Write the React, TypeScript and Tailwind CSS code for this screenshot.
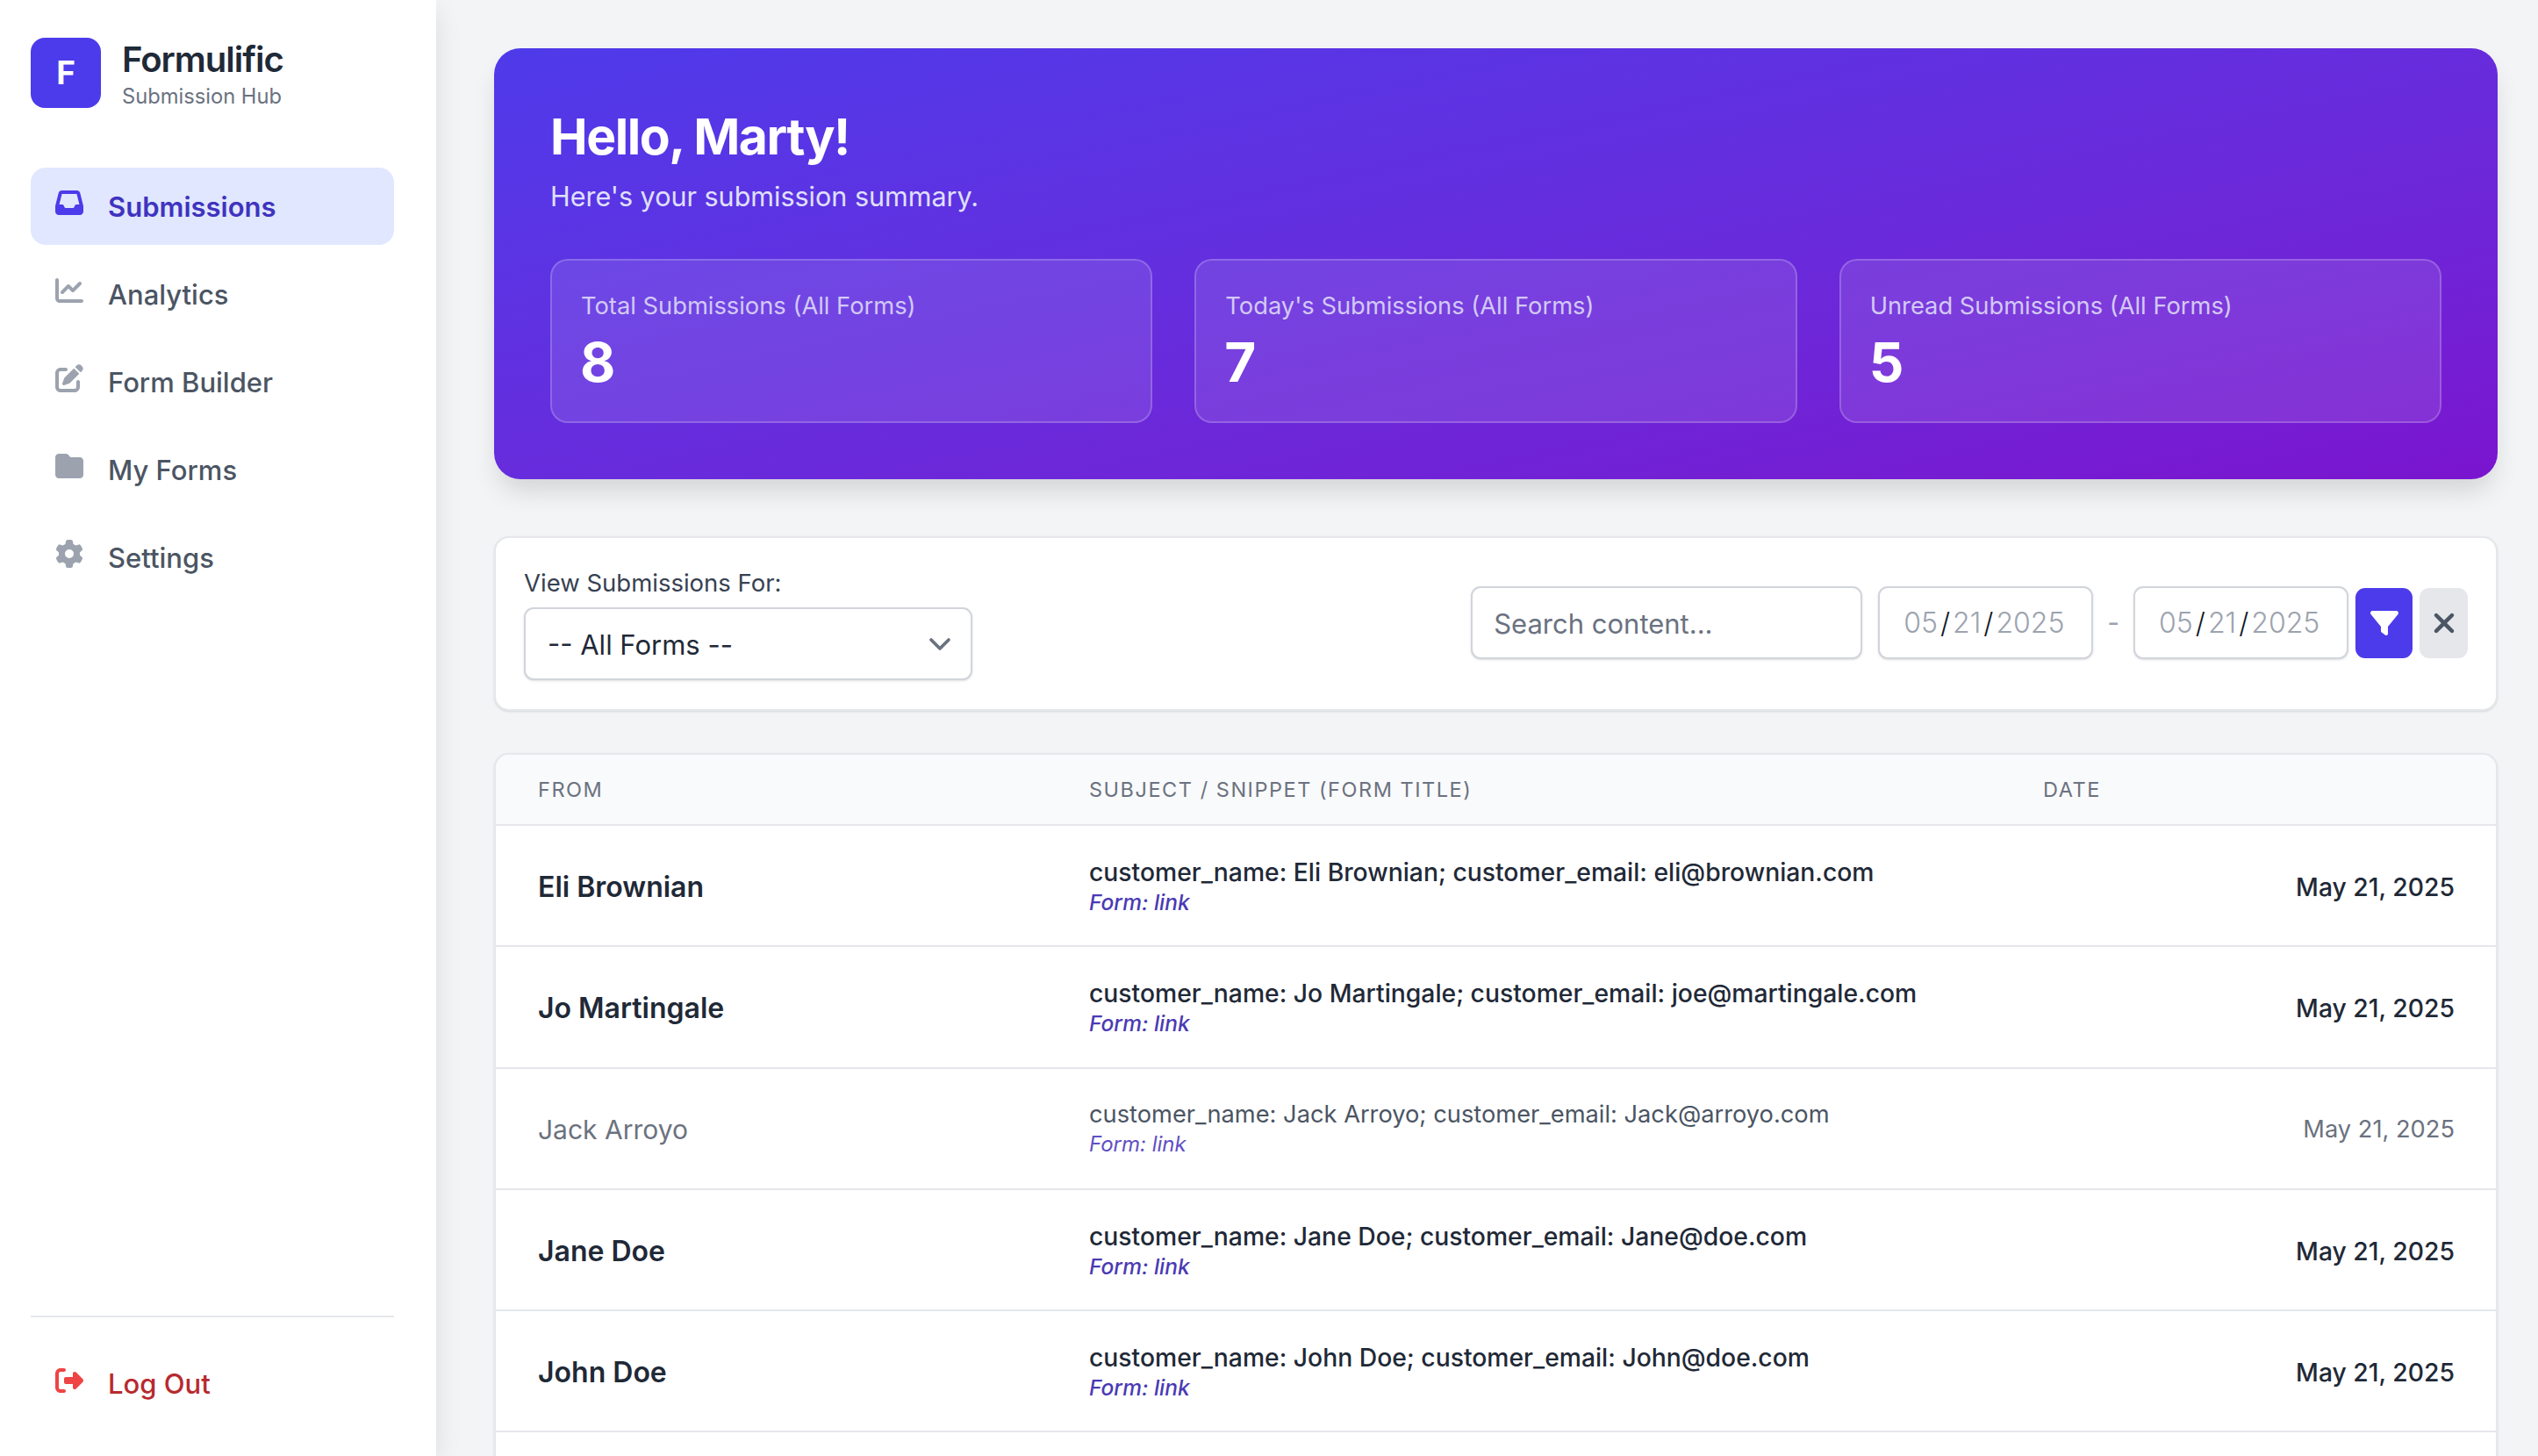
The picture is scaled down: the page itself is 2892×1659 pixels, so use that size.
import React from 'react'
import { FaInbox, FaChartLine, FaPenToSquare, FaFolder, FaGear, FaRightFromBracket, FaFilter, FaXmark } from 'react-icons/fa6'

const navItems = [
    { label: 'Submissions', icon: FaInbox, active: true },
    { label: 'Analytics', icon: FaChartLine },
    { label: 'Form Builder', icon: FaPenToSquare },
    { label: 'My Forms', icon: FaFolder },
    { label: 'Settings', icon: FaGear },
]

const stats = [
    { label: 'Total Submissions (All Forms)', value: '8' },
    { label: "Today's Submissions (All Forms)", value: '7' },
    { label: 'Unread Submissions (All Forms)', value: '5' },
]

const rows = [
    { name: 'Eli Brownian', email: 'eli@brownian.com', unread: true },
    { name: 'Jo Martingale', email: 'joe@martingale.com', unread: true },
    { name: 'Jack Arroyo', email: 'Jack@arroyo.com', unread: false },
    { name: 'Jane Doe', email: 'Jane@doe.com', unread: true },
    { name: 'John Doe', email: 'John@doe.com', unread: true },
]

function DateBox() {
    return (
        <div className="flex h-[83px] w-[245px] items-center rounded-[11px] border-2 border-[#d1d5db] bg-white pl-[27px] text-[32px] font-light text-[#9ca3af] shadow-sm">
            <span>05</span>
            <span className="mx-[3px] text-[#111827]">/</span>
            <span>21</span>
            <span className="mx-[3px] text-[#111827]">/</span>
            <span>2025</span>
        </div>
    )
}

function Sidebar() {
    return (
        <aside className="z-10 flex h-screen w-[497px] shrink-0 flex-col bg-white pt-[43px] pr-[48px] pl-[35px] shadow-[0_10px_30px_-3px_rgba(0,0,0,0.12)]">
            <div className="flex items-start">
                <div className="flex h-[80px] w-[80px] items-center justify-center rounded-[16px] bg-[#4c3bea] text-[37px] font-bold text-white">
                    F
                </div>
                <div className="ml-[24px]">
                    <div className="text-[40px] leading-[50px] font-semibold tracking-tight text-[#1f2937]">Formulific</div>
                    <div className="mt-[3px] text-[23.7px] leading-[28px] text-[#6b7280]">Submission Hub</div>
                </div>
            </div>

            <nav className="mt-[67px] flex flex-col gap-[12px]">
                {navItems.map((item) => (
                    <div
                        key={item.label}
                        className={
                            item.active
                                ? 'flex h-[88px] items-center rounded-[17px] bg-[#e0e7ff] pt-[2px] pl-[28px] text-[#3f33c0]'
                                : 'flex h-[88px] items-center rounded-[17px] pt-[2px] pl-[28px] text-[#4b5563]'
                        }
                    >
                        <item.icon
                            size={32}
                            className={item.active ? 'mb-[10px] text-[#4c3bea]' : 'mb-[10px] text-[#9ca3af]'}
                        />
                        <span className={item.active ? 'ml-[28px] text-[31px] font-semibold' : 'ml-[28px] text-[31px] font-medium'}>
                            {item.label}
                        </span>
                    </div>
                ))}
            </nav>

            <div className="mt-auto border-t-2 border-[#e5e7eb] pt-[32px] pb-[38px]">
                <div className="flex h-[88px] items-center pl-[28px] text-[#b72a2f]">
                    <FaRightFromBracket size={32} className="mb-[8px] text-[#ef4444]" />
                    <span className="ml-[28px] text-[31px] font-medium">Log Out</span>
                </div>
            </div>
        </aside>
    )
}

function App() {
    return (
        <div className="flex h-screen overflow-hidden bg-[#f3f4f6] font-[Inter,sans-serif] antialiased">
            <Sidebar />
            <main className="min-w-0 flex-1 pt-[55px] pr-[46px] pl-[66px]">
                <section className="rounded-[30px] bg-gradient-to-br from-[#4e3aea] to-[#7a14cf] p-[64px] shadow-[0_18px_30px_-6px_rgba(0,0,0,0.14)]">
                    <h1 className="pt-[4px] text-[57px] leading-[66px] font-bold tracking-tight text-white">Hello, Marty!</h1>
                    <p className="mt-[10px] text-[30.5px] leading-[50px] text-[#e0e0fc]">Here's your submission summary.</p>
                    <div className="mt-[46px] grid grid-cols-3 gap-[48px]">
                        {stats.map((stat) => (
                            <div key={stat.label} className="h-[187px] rounded-[20px] border-2 border-white/20 bg-white/10 px-[33px] pt-[34px]">
                                <div className="text-[27.3px] leading-[36px] text-[#d3c9f7]">{stat.label}</div>
                                <div className="mt-[10px] -ml-[1px] text-[62px] leading-[72px] font-bold text-white">{stat.value}</div>
                            </div>
                        ))}
                    </div>
                </section>

                <section className="mt-[65px] flex h-[199px] items-start justify-between rounded-[17px] border-2 border-[#e5e7eb] bg-white px-[32px] shadow-sm">
                    <div className="pt-[31px]">
                        <label className="block text-[27.5px] leading-[40px] text-[#374151]">View Submissions For:</label>
                        <div className="mt-[8px] flex h-[83px] w-[511px] items-center justify-between rounded-[11px] border-2 border-[#d1d5db] bg-white pr-[10px] pl-[25px] text-[31px] text-[#1f2937] shadow-sm">
                            <span className="pt-[3px]">-- All Forms --</span>
                            <svg viewBox="0 0 20 20" fill="none" className="h-[50px] w-[50px]">
                                <path d="M6 8l4 4 4-4" stroke="#6b7280" strokeWidth="1.5" strokeLinecap="round" strokeLinejoin="round" />
                            </svg>
                        </div>
                    </div>
                    <div className="flex items-center pt-[55px]">
                        <div className="flex h-[83px] w-[446px] items-center rounded-[11px] border-2 border-[#d1d5db] bg-white pt-[3px] pl-[24px] text-[31px] text-[#6b7280] shadow-sm">
                            Search content...
                        </div>
                        <div className="ml-[18px]"><DateBox /></div>
                        <span className="mx-[16px] text-[30px] text-[#9ca3af]">-</span>
                        <DateBox />
                        <button className="ml-[8px] flex h-[80px] w-[65px] items-center justify-center rounded-[11px] bg-[#4c3bea] text-white">
                            <FaFilter size={32} />
                        </button>
                        <button className="ml-[8px] flex h-[80px] w-[55px] items-center justify-center rounded-[11px] bg-[#e5e7eb] text-[#4b5563]">
                            <FaXmark size={36} />
                        </button>
                    </div>
                </section>

                <section className="mt-[48px] overflow-hidden rounded-[17px] border-x-2 border-t-2 border-[#e5e7eb] bg-white shadow-sm">
                    <div className="grid h-[81px] grid-cols-[627px_1086px_1fr] items-center border-b-2 border-[#e5e7eb] bg-[#f9fafb] text-[23.5px] tracking-[0.065em] text-[#6b7280] uppercase">
                        <div className="pl-[48px]">From</div>
                        <div className="pl-[49px]">Subject / Snippet (Form Title)</div>
                        <div className="pl-[50px]">Date</div>
                    </div>
                    {rows.map((row) => (
                        <div
                            key={row.name}
                            className="grid h-[138.3px] grid-cols-[627px_1086px_1fr] items-center border-b-2 border-[#e5e7eb] pt-[4px]"
                        >
                            <div className={row.unread ? 'pl-[48px] text-[32px] font-semibold text-[#1f2937]' : 'pl-[48px] text-[30px] text-[#6b7280]'}>
                                {row.name}
                            </div>
                            <div className="-mt-[3px] pl-[49px]">
                                <div className={row.unread ? 'text-[28.3px] leading-[36px] font-medium text-[#1f2937]' : 'text-[27.25px] leading-[36px] text-[#4b5563]'}>
                                    customer_name: {row.name}; customer_email: {row.email}
                                </div>
                                <div className={row.unread ? 'text-[24.5px] leading-[32px] font-medium text-[#4a3ab5] italic' : 'text-[24px] leading-[32px] text-[#5f50c4] italic'}>
                                    Form: link
                                </div>
                            </div>
                            <div className={row.unread ? 'pr-[47px] text-right text-[28.3px] font-medium text-[#1f2937]' : 'pr-[47px] text-right text-[27.25px] text-[#6b7280]'}>
                                May 21, 2025
                            </div>
                        </div>
                    ))}
                    <div className="h-[138px]" />
                </section>
            </main>
        </div>
    )
}

export default App
